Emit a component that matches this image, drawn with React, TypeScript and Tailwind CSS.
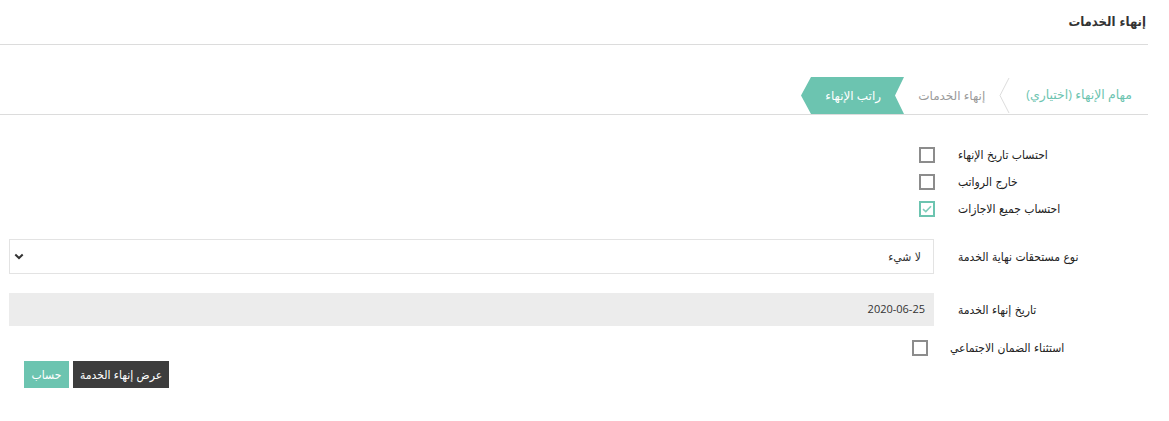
import React from 'react'

const font = { fontFamily: '"Open Sans", "DejaVu Sans", sans-serif' }
const narrow = { fontFamily: '"DejaVu Sans Condensed", "DejaVu Sans", sans-serif' }

function Box({ checked = false }: { checked?: boolean }) {
    return (
        <span
            className={`flex h-4 w-4 items-center justify-center border-2 ${checked ? 'border-[#6cc4b0]' : 'border-[#8c8c8c]'}`}
        >
            {checked && (
                <svg width="10" height="8" viewBox="0 0 10 8" fill="none">
                    <path d="M1 4.2 L3.8 6.6 L9 1.2" stroke="#7fcdbb" strokeWidth="1.6" />
                </svg>
            )}
        </span>
    )
}

function Label({ children, w = 'w-[190px]' }: { children: React.ReactNode; w?: string }) {
    return (
        <div className={`${w} text-left text-[12px] text-[#222]`} style={narrow}>
            {children}
        </div>
    )
}

function CheckRow({ label, checked }: { label: string; checked?: boolean }) {
    return (
        <div className="flex h-[27px] items-center">
            <Label>{label}</Label>
            <div className="flex w-[214px] justify-start pr-[23px]">
                <Box checked={checked} />
            </div>
        </div>
    )
}

export default function App() {
    return (
        <div dir="rtl" className="min-h-[421px] w-full bg-white" style={font}>
            <div className="pr-[21px]">
                <div className="flex h-[45px] items-center border-b border-[#dcdcdc] pb-[1px]">
                    <h1 className="pr-[2px] text-[13px] font-bold text-[#333]" style={narrow}>إنهاء الخدمات</h1>
                </div>

                <div className="mt-[32px] flex h-[38px] items-stretch border-b border-[#dcdcdc]">
                    <div className="flex items-center pr-[16px] pl-[15px] text-[12.5px] text-[#6cc4b0]">
                        مهام الإنهاء (اختياري)
                    </div>
                    <svg width="12" height="37" viewBox="0 0 12 37" className="self-start">
                        <path d="M10 1 L1 18.5 L10 36" stroke="#dddddd" strokeWidth="1" fill="none" />
                    </svg>
                    <div className="flex items-center pr-[14px] pl-[14px] text-[12px] text-[#9a9a9a]">
                        إنهاء الخدمات
                    </div>
                    <div className="relative flex w-[104px] items-center justify-center">
                        <svg width="104" height="37" viewBox="0 0 104 37" className="absolute inset-0">
                            <polygon points="104,0 11,0 1,18.5 11,37 104,37 95,18.5" fill="#6cc4b0" />
                        </svg>
                        <span className="relative pl-[2px] text-[12px] text-white">راتب الإنهاء</span>
                    </div>
                </div>
            </div>

            <div className="pr-[21px] pl-[9px] pt-[26px]">
                <CheckRow label="احتساب تاريخ الإنهاء" />
                <CheckRow label="خارج الرواتب" />
                <CheckRow label="احتساب جميع الاجازات" checked />

                <div className="mt-[17px] flex items-center">
                    <Label>نوع مستحقات نهاية الخدمة</Label>
                    <div className="mr-[24px] flex h-[35px] flex-1 items-center justify-between border border-[#e3e3e3] pr-[12px] pl-[4px]">
                        <span className="text-[12px] text-[#333]" style={narrow}>لا شيء</span>
                        <svg width="10" height="7" viewBox="0 0 10 7" fill="none">
                            <path d="M1.3 1.5 L5 5 L8.7 1.5" stroke="#333" strokeWidth="2" />
                        </svg>
                    </div>
                </div>

                <div className="mt-[19px] flex items-center">
                    <Label>تاريخ إنهاء الخدمة</Label>
                    <div className="mr-[24px] flex h-[33px] flex-1 items-center border border-[#ececec] bg-[#ececec] pr-[8px]">
                        <span dir="ltr" className="text-[11px] text-[#333]">2020-06-25</span>
                    </div>
                </div>

                <div className="mt-[8px] flex h-[27px] items-center">
                    <Label w="w-[198px]">استثناء الضمان الاجتماعي</Label>
                    <div className="flex pr-[22px]">
                        <Box />
                    </div>
                </div>
            </div>

            <div dir="ltr" className="flex gap-[4px] pl-[24px]">
                <button className="h-[27px] w-[45px] bg-[#6cc4b0] text-[12px] text-white" style={narrow}>حساب</button>
                <button className="h-[27px] w-[96px] bg-[#3d3d3d] text-[12px] text-white" style={narrow}>عرض إنهاء الخدمة</button>
            </div>
        </div>
    )
}
